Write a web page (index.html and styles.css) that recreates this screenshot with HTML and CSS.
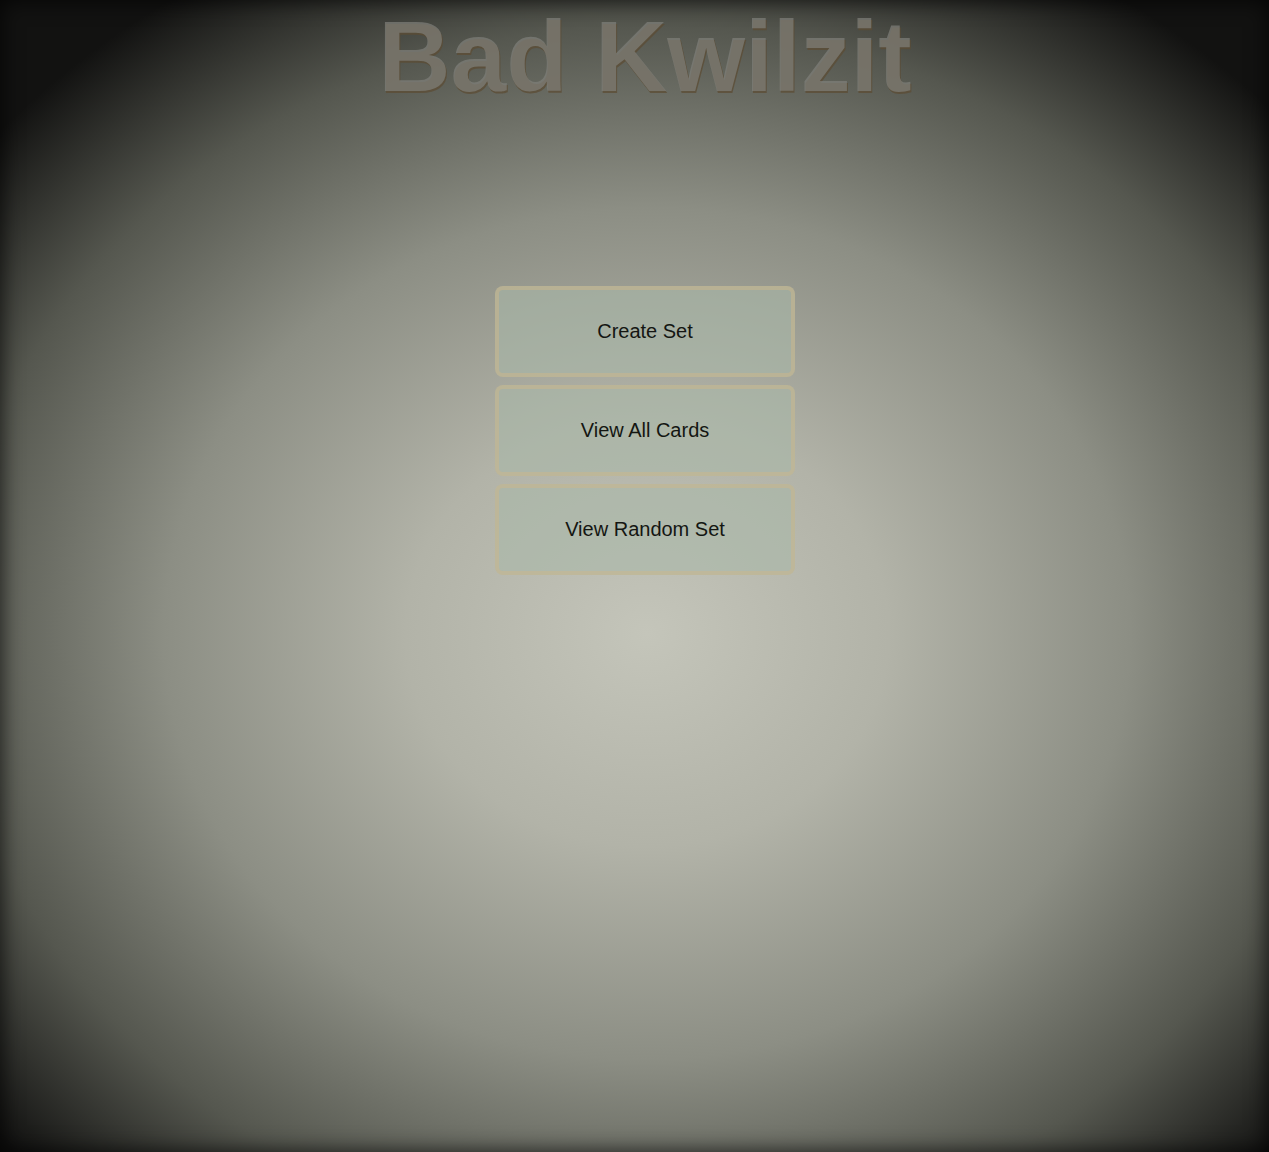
FILE: index.html
```html
<!DOCTYPE html>
<html lang="en">
<head>
<meta charset="utf-8">
<title>Bad Kwilzit</title>
<link rel="stylesheet" href="styles.css">
</head>
<body>
<div class="page">
  <h1 class="title">Bad Kwilzit</h1>
  <nav class="menu">
    <button class="menu-btn">Create Set</button>
    <button class="menu-btn">View All Cards</button>
    <button class="menu-btn">View Random Set</button>
  </nav>
</div>
</body>
</html>
```

FILE: styles.css
```css
html, body {
  margin: 0;
  padding: 0;
  height: 100%;
}
body {
  font-family: "Liberation Sans", Arial, sans-serif;
  background: radial-gradient(ellipse 68% 66% at 51% 55%, #c4c5ba 0%, #b2b3a8 28%, #8c8e84 56%, #55574f 80%, #121211 100%);
  background-color: #121211;
}
.page {
  min-height: 100vh;
  box-sizing: border-box;
  padding-left: 21px;
  box-shadow: inset 0 0 22px rgba(0,0,0,0.8);
  display: flex;
  flex-direction: column;
  align-items: center;
}
.title {
  margin: 0;
  font-size: 100px;
  font-weight: bold;
  line-height: 113px;
  color: rgba(128, 128, 122, 0.7);
  text-shadow: 1px 2px 0 rgba(92, 76, 52, 0.75);
}
.menu {
  margin-top: 173px;
  display: flex;
  flex-direction: column;
  gap: 8px;
}
.menu-btn {
  width: 300px;
  height: 91px;
  box-sizing: border-box;
  border: 4px solid rgba(205, 182, 138, 0.5);
  border-radius: 8px;
  background: rgba(168, 184, 168, 0.6);
  font-family: "Liberation Sans", Arial, sans-serif;
  font-size: 20px;
  color: #141612;
  padding: 0;
  cursor: pointer;
}
```
